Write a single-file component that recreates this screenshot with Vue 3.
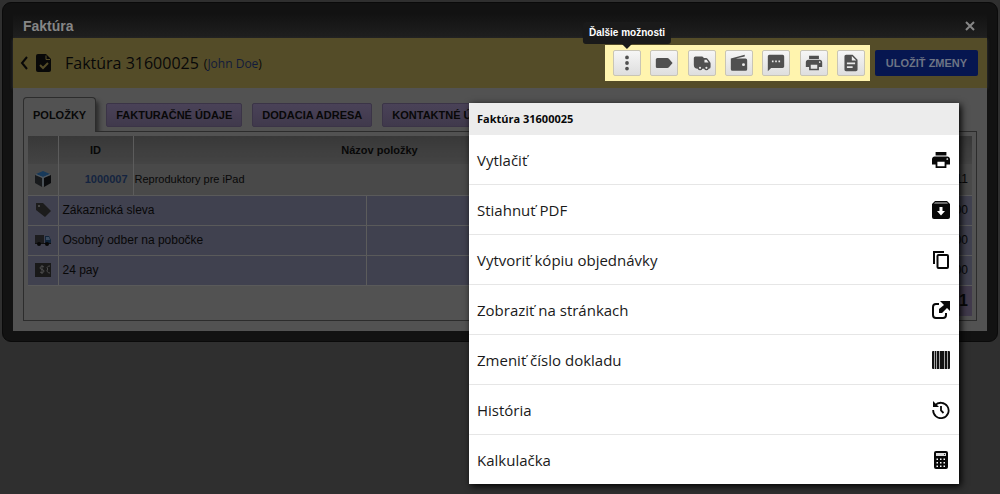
<script setup>
const icons = {
  more: 'M12 7.500a2.300 2.300 0 1 0 0-4.600 2.300 2.300 0 0 0 0 4.600zM12 14.300a2.300 2.300 0 1 0 0-4.600 2.300 2.300 0 0 0 0 4.600zM12 21.100a2.300 2.300 0 1 0 0-4.600 2.300 2.300 0 0 0 0 4.600z',
  label: 'M4 5.800h12c.8 0 1.500.4 2 1L22.500 12l-4.500 5.200c-.5.6-1.200 1-2 1H4c-1.100 0-2-.9-2-2V7.800c0-1.100.9-2 2-2z',
  truck: 'M4 4h8a2 2 0 0 1 2 2h3c.8 0 1.500.3 2 1l3 4c.3.5.5 1 .5 1.600V17a2 2 0 0 1-2 2h-.300a3 3 0 0 1-5.600 0h-2.200a3 3 0 0 1-5.600 0A5 5 0 0 1 2 14V6a2 2 0 0 1 2-2zM15 8v3.500h5L17.600 8zM9.600 16.600a1.300 1.300 0 1 0 0 2.600 1.300 1.300 0 0 0 0-2.600zM17.400 16.600a1.300 1.300 0 1 0 0 2.600 1.300 1.300 0 0 0 0-2.600z',
  wallet: 'M2 6.500 19 2v2.200L8 6.500h12a2 2 0 0 1 2 2v11a2 2 0 0 1-2 2H4a2 2 0 0 1-2-2zM17.500 12.200a1.800 1.800 0 1 0 0 3.600 1.800 1.800 0 0 0 0-3.600z',
  chat: 'M20 2H4c-1.100 0-2 .9-2 2v18l4-4h14c1.100 0 2-.9 2-2V4c0-1.100-.9-2-2-2zM9 11H7V9h2v2zm4 0h-2V9h2v2zm4 0h-2V9h2v2z',
  print: 'M19 8H5c-1.660 0-3 1.340-3 3v6h4v4h12v-4h4v-6c0-1.660-1.340-3-3-3zm-3 11H8v-5h8v5zm3-7c-.55 0-1-.45-1-1s.45-1 1-1 1 .45 1 1-.45 1-1 1zm-1-9H6v4h12V3z',
  doc: 'M14 2H6c-1.100 0-2 .9-2 2v16c0 1.100.9 2 2 2h12c1.100 0 2-.9 2-2V8l-6-6zM13 9V3.500L18.500 9H13zM7 11.500h10v2H7zM7 16h7v2H7z',
}

const actions = [
  { icon: 'more', label: 'Ďalšie možnosti' },
  { icon: 'label', label: 'Štítok' },
  { icon: 'truck', label: 'Doprava' },
  { icon: 'wallet', label: 'Platba' },
  { icon: 'chat', label: 'Správa' },
  { icon: 'print', label: 'Tlač' },
  { icon: 'doc', label: 'Dokument' },
]

const menu = [
  { icon: 'print', label: 'Vytlačiť' },
  { icon: 'archive', label: 'Stiahnuť PDF' },
  { icon: 'copy', label: 'Vytvoriť kópiu objednávky' },
  { icon: 'open', label: 'Zobraziť na stránkach' },
  { icon: 'barcode', label: 'Zmeniť číslo dokladu' },
  { icon: 'history', label: 'História' },
  { icon: 'calc', label: 'Kalkulačka' },
]

const tabs = ['POLOŽKY', 'FAKTURAČNÉ ÚDAJE', 'DODACIA ADRESA', 'KONTAKTNÉ ÚDAJE']

const extras = [
  { icon: 'tag', label: 'Zákaznická sleva' },
  { icon: 'van', label: 'Osobný odber na pobočke' },
  { icon: 'pay', label: '24 pay' },
]
</script>

<template>
  <main class="page">
    <section class="window">
      <header class="titlebar">
        <h1>Faktúra</h1>
        <button class="close" aria-label="Zavrieť">
          <svg viewBox="0 0 10 10" width="10" height="10"><path d="M1 1l8 8M9 1l-8 8" fill="none" stroke="#868686" stroke-width="2" /></svg>
        </button>
      </header>

      <div class="toolbar">
        <button class="back" aria-label="Späť">
          <svg viewBox="0 0 8 14" width="8" height="14"><path d="M7 1L2 7l5 6" fill="none" stroke="#080808" stroke-width="2" /></svg>
        </button>
        <svg class="filecheck" viewBox="0 0 16 18" width="16" height="18">
          <path d="M2 0h8l5 5v11a2 2 0 0 1-2 2H2a2 2 0 0 1-2-2V2a2 2 0 0 1 2-2z" fill="#080808" />
          <path d="M10 1.500v4h4" fill="none" stroke="#544c28" />
          <path d="M4 11l3 3 5-5" fill="none" stroke="#544c28" stroke-width="2" />
        </svg>
        <h2>Faktúra 31600025</h2>
        <span class="who">(<a href="#">John Doe</a>)</span>
        <div class="actions">
          <div v-for="a in actions" :key="a.icon" class="action">
            <button :aria-label="a.label">
              <svg viewBox="1 1 22 22" width="18" height="18"><path :d="icons[a.icon]" fill="#505050" fill-rule="evenodd" /></svg>
            </button>
            <span v-if="a.icon === 'more'" class="tooltip" role="tooltip">{{ a.label }}</span>
          </div>
        </div>
        <button class="save">ULOŽIŤ ZMENY</button>
      </div>

      <div class="body">
        <nav class="tabs">
          <button v-for="(t, i) in tabs" :key="t" :class="['tab', { active: i === 0 }]">{{ t }}</button>
        </nav>
        <div class="panel">
          <table>
            <colgroup>
              <col class="c-icon"><col class="c-id"><col class="c-name"><col class="c-more"><col>
            </colgroup>
            <thead>
              <tr><th></th><th>ID</th><th colspan="2">Názov položky</th><th></th></tr>
            </thead>
            <tbody>
              <tr class="product">
                <td class="ic">
                  <svg viewBox="0 0 16 16" width="16" height="16">
                    <path d="M8 0l7 3-7 3-7-3z" fill="#17395a" />
                    <path d="M0 4l7 3v9l-7-4z" fill="#181a1c" />
                    <path d="M16 4L9 7v9l7-4z" fill="#0b0c0e" />
                    <path d="M1 3.500l7 3 7-3M8 6.500V15" fill="none" stroke="#4d5a66" />
                  </svg>
                </td>
                <td class="id"><a href="#">1000007</a></td>
                <td colspan="2" class="name">Reproduktory pre iPad</td>
                <td class="val">11</td>
              </tr>
              <tr v-for="e in extras" :key="e.icon" class="extra">
                <td class="ic">
                  <svg v-if="e.icon === 'tag'" viewBox="0 0 16 16" width="16" height="16">
                    <path d="M1 1l7 0 8 8-6 6-9-7z" fill="#1c1c1c" /><circle cx="4" cy="4" r="1" fill="#555" />
                  </svg>
                  <svg v-else-if="e.icon === 'van'" viewBox="0 0 16 16" width="16" height="16">
                    <path d="M0 3h9v8H0z" fill="#1d1d1f" /><path d="M10 4h4l2 4v4h-6z" fill="#12253a" />
                    <path d="M11 5h3l1 3h-4z" fill="#3c4c60" /><path d="M0 11h16v1H0z" fill="#111" />
                    <circle cx="4" cy="12" r="2" fill="#080808" /><circle cx="12" cy="12" r="2" fill="#080808" />
                  </svg>
                  <svg v-else viewBox="0 0 16 16" width="16" height="16">
                    <path d="M0 1h16v14H0z" fill="#191919" />
                    <path d="M9 5c-1-1-4-1-4 1s4 1 4 3-3 2-4 1M7 3v9M15 4c-2 0-3 1-3 2l1 1-1 1c0 2 1 3 3 3" fill="none" stroke="#4c4c4c" />
                  </svg>
                </td>
                <td colspan="2" class="label">{{ e.label }}</td>
                <td colspan="2" class="val">00</td>
              </tr>
            </tbody>
            <tfoot>
              <tr><td colspan="4"></td><td class="total">1</td></tr>
            </tfoot>
          </table>
        </div>
      </div>
    </section>

    <aside class="menu">
      <h3>Faktúra 31600025</h3>
      <ul>
        <li v-for="m in menu" :key="m.label">
          <button>
            <span>{{ m.label }}</span>
            <svg v-if="m.icon === 'open'" viewBox="0 0 18 18" width="18" height="18">
              <path d="M7 3H4a3 3 0 0 0-3 3v8a3 3 0 0 0 3 3h7a3 3 0 0 0 3-3v-2" fill="none" stroke="#080808" stroke-width="2" />
              <path d="M8 0h10v10l-3-3-5 5H7V8l5-4z" fill="#080808" />
            </svg>
            <svg v-else-if="m.icon === 'barcode'" viewBox="0 0 18 18" width="18" height="18">
              <rect width="18" height="18" rx="1" fill="#111" />
              <path d="M2.500 0v18M4.500 0v18M7.500 0v18M12.500 0v18M15.500 0v18" stroke="#a4a4a4" />
            </svg>
            <svg v-else-if="m.icon === 'calc'" viewBox="0 0 18 18" width="18" height="18">
              <rect x="2" width="14" height="18" rx="2" fill="#080808" />
              <path d="M4 2h10v3H4z" fill="#ddd" /><path d="M12 3h1v1h-1z" fill="#333" />
              <path d="M4.500 7.500H6V9H4.500zM8 7.500h1.500V9H8zM11.500 7.500H13V9h-1.500zM4.500 11H6v1.500H4.500zM8 11h1.500v1.500H8zM11.500 11H13v1.500h-1.500zM4.500 14.500H6V16H4.500zM8 14.500h1.500V16H8zM11.500 14.500H13V16h-1.500z" fill="#fff" />
            </svg>
            <svg v-else-if="m.icon === 'history'" viewBox="0 0 18 18" width="18" height="18">
              <path d="M3 4.500a7.700 7.700 0 1 1-1.800 4.500" fill="none" stroke="#080808" stroke-width="1.800" />
              <path d="M1 0v6h6z" fill="#080808" />
              <path d="M9 5v4.500l2.500 2.500" fill="none" stroke="#080808" stroke-width="1.800" />
            </svg>
            <svg v-else-if="m.icon === 'archive'" viewBox="0 0 18 18" width="18" height="18">
              <path d="M3 0h12l3 3v13a2 2 0 0 1-2 2H2a2 2 0 0 1-2-2V3z" fill="#080808" />
              <path d="M3 1.500h12l1 1H2z" fill="#ccc" />
              <path d="M7.500 6h3v4H13l-4 4.500L5 10h2.500z" fill="#fff" />
            </svg>
            <svg v-else-if="m.icon === 'print'" viewBox="2 3 20 18" width="18" height="18"><path :d="icons.print" fill="#080808" fill-rule="evenodd" /></svg>
            <svg v-else viewBox="0 0 18 18" width="18" height="18">
              <path d="M2 13V1h10" fill="none" stroke="#080808" stroke-width="2" />
              <rect x="5.500" y="4" width="10.500" height="13" rx="1" fill="none" stroke="#080808" stroke-width="2" />
            </svg>
          </button>
        </li>
      </ul>
    </aside>
  </main>
</template>

<style>
body {
  background: #2f2f2f;
}
</style>

<style scoped>
* {
  box-sizing: border-box;
}
.page {
  position: relative;
  min-height: 100vh;
  padding: 2px;
  font-family: "Liberation Sans", Arial, sans-serif;
  font-size: 12px;
  color: #080808;
}
button {
  margin: 0;
  padding: 0;
  border: 0;
  background: none;
  font: inherit;
  color: inherit;
  cursor: pointer;
}
svg {
  display: block;
  flex: none;
}
h1, h2, h3, ul {
  margin: 0;
  padding: 0;
}
.window {
  padding: 10px;
  border: 1px solid #0a0a0a;
  border-radius: 9px;
  background: #121212;
}
.titlebar {
  display: flex;
  align-items: center;
  justify-content: space-between;
  height: 25px;
  padding: 0 12px 0 10px;
  background: linear-gradient(#121212, #1f1f1f);
}
h1 {
  font-size: 14px;
  line-height: 20px;
  color: #868686;
}
.toolbar {
  display: flex;
  align-items: center;
  height: 50px;
  padding: 0 9px 0 7px;
  background: #544c28;
  box-shadow: 0 1px 3px #3a3a3a;
}
.filecheck {
  margin-left: 8px;
}
h2 {
  margin-left: 13px;
  font: 400 16px/24px "Open Sans", sans-serif;
  white-space: nowrap;
}
.who {
  margin: 2px 0 0 5px;
  font: 12px/20px "Open Sans", sans-serif;
  white-space: nowrap;
}
a {
  color: #111b3b;
  text-decoration: none;
}
.actions {
  display: flex;
  justify-content: space-between;
  width: 265px;
  margin-left: auto;
  padding: 5px 5px 5px 8px;
  background: #fff4ae;
}
.action {
  position: relative;
}
.action button {
  display: flex;
  align-items: center;
  justify-content: center;
  width: 28px;
  height: 26px;
  border: 1px solid #c9c5b5;
  border-radius: 2px;
  background: linear-gradient(#f6f6f6, #dedede);
}
.tooltip {
  position: absolute;
  bottom: 32px;
  left: 50%;
  transform: translateX(-50%);
  padding: 4px 6px;
  border-radius: 3px;
  background: #1a1a1a;
  color: #fff;
  font-size: 10px;
  font-weight: 700;
  line-height: 14px;
  white-space: nowrap;
}
.tooltip::after {
  content: "";
  position: absolute;
  top: 100%;
  left: 50%;
  margin-left: -5px;
  border: 5px solid transparent;
  border-top-color: #1a1a1a;
}
.save {
  width: 103px;
  height: 26px;
  margin-left: 5px;
  border-radius: 2px;
  background: #061650;
  color: #6d7485;
  font-size: 11px;
  font-weight: 700;
  white-space: nowrap;
}
.body {
  padding: 9px 10px 10px;
  background: #525252;
}
.tabs {
  display: flex;
  align-items: center;
  gap: 10px;
  height: 35px;
  overflow: hidden;
}
.tab {
  height: 24px;
  padding: 0 9px;
  border: 1px solid #3b3447;
  border-radius: 2px;
  background: linear-gradient(#4a4258, #40394c);
  font-size: 11px;
  font-weight: 700;
  white-space: nowrap;
}
.tab.active {
  position: relative;
  z-index: 1;
  align-self: stretch;
  height: auto;
  border-color: #2c2c2c;
  border-bottom: 0;
  border-radius: 4px 4px 0 0;
  background: #525252;
  box-shadow: 3px 4px 4px #2c2c2c;
}
.panel {
  margin-top: -1px;
  padding: 4px;
  border: 1px solid #2c2c2c;
}
table {
  width: 100%;
  border-collapse: collapse;
  table-layout: fixed;
}
.c-icon {
  width: 30px;
}
.c-id {
  width: 75px;
}
.c-name {
  width: 233px;
}
.c-more {
  width: 260px;
}
th, td {
  padding: 0;
  border-left: 1px solid #5c5c5c;
  font-size: 12px;
}
th:first-child, td:first-child {
  border-left: 0;
}
th {
  height: 28px;
  background: linear-gradient(#383838, #444);
  font-size: 11px;
}
tbody td {
  height: 30px;
  border-bottom: 1px solid #5a5a5a;
  white-space: nowrap;
}
.product td {
  height: 31px;
  background: #494949;
}
.extra td {
  background: #40414f;
}
.ic svg {
  margin: 0 auto;
}
.id {
  padding-right: 5px;
  text-align: right;
}
.id a {
  color: #142440;
  font-size: 11px;
  font-weight: 700;
}
.name {
  padding-left: 1px;
  font-size: 11px;
}
.label {
  padding-left: 4px;
}
.val {
  padding-right: 4px;
  text-align: right;
}
tfoot td {
  height: 31px;
  border: 0;
}
.total {
  padding-right: 4px;
  background: #413a4c;
  font-size: 16px;
  font-weight: 700;
  text-align: right;
}
.menu {
  position: absolute;
  top: 103px;
  right: 41px;
  width: 49%;
  background: #fff;
  box-shadow: 2px 2px 7px #000;
  font-family: "Open Sans", sans-serif;
}
h3 {
  padding: 0 8px;
  background: #ececec;
  font-size: 11px;
  line-height: 32px;
}
ul {
  list-style: none;
}
li + li {
  border-top: 1px solid #e6e6e6;
}
li button {
  display: flex;
  align-items: center;
  justify-content: space-between;
  width: 100%;
  height: 49px;
  padding: 0 9px 0 8px;
  font-size: 15px;
  text-align: left;
  color: #1a1a1a;
}
</style>
